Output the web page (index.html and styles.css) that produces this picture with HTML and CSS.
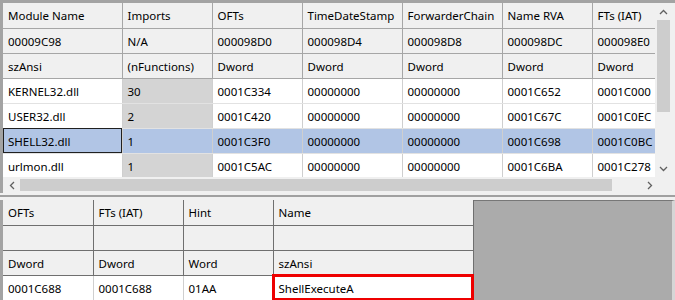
FILE: index.html
```html
<!DOCTYPE html>
<html>
<head>
    <title>Import Directory</title>
    <link rel="stylesheet" href="styles.css">
</head>
<body>
    <div class="pane top-pane">
        <div class="view">
            <div class="grid-wrap">
                <table class="grid modules">
                    <colgroup>
                        <col style="width:119px"><col style="width:90px"><col style="width:90px"><col style="width:100px"><col style="width:100px"><col style="width:90px"><col style="width:90px">
                    </colgroup>
                    <tr class="head">
                        <td>Module Name</td><td>Imports</td><td>OFTs</td><td>TimeDateStamp</td><td>ForwarderChain</td><td>Name RVA</td><td>FTs (IAT)</td>
                    </tr>
                    <tr class="head">
                        <td>00009C98</td><td>N/A</td><td>000098D0</td><td>000098D4</td><td>000098D8</td><td>000098DC</td><td>000098E0</td>
                    </tr>
                    <tr class="head">
                        <td>szAnsi</td><td>(nFunctions)</td><td>Dword</td><td>Dword</td><td>Dword</td><td>Dword</td><td>Dword</td>
                    </tr>
                    <tr>
                        <td>KERNEL32.dll</td><td class="count">30</td><td>0001C334</td><td>00000000</td><td>00000000</td><td>0001C652</td><td>0001C000</td>
                    </tr>
                    <tr>
                        <td>USER32.dll</td><td class="count">2</td><td>0001C420</td><td>00000000</td><td>00000000</td><td>0001C67C</td><td>0001C0EC</td>
                    </tr>
                    <tr class="selected">
                        <td class="focus">SHELL32.dll</td><td class="count">1</td><td>0001C3F0</td><td>00000000</td><td>00000000</td><td>0001C698</td><td>0001C0BC</td>
                    </tr>
                    <tr>
                        <td>urlmon.dll</td><td class="count">1</td><td>0001C5AC</td><td>00000000</td><td>00000000</td><td>0001C6BA</td><td>0001C278</td>
                    </tr>
                </table>
            </div>
            <div class="vscroll">
                <div class="arrow">
                    <svg width="9" height="6" viewBox="0 0 9 6"><path d="M1 5 L4.5 1.5 L8 5" fill="none" stroke="#606060" stroke-width="1.3"/></svg>
                </div>
                <div class="vtrack"><div class="vthumb"></div></div>
                <div class="arrow">
                    <svg width="9" height="6" viewBox="0 0 9 6"><path d="M1 1 L4.5 4.5 L8 1" fill="none" stroke="#606060" stroke-width="1.3"/></svg>
                </div>
            </div>
        </div>
        <div class="hscroll">
            <div class="arrow">
                <svg width="6" height="9" viewBox="0 0 6 9"><path d="M5 1 L1.5 4.5 L5 8" fill="none" stroke="#606060" stroke-width="1.3"/></svg>
            </div>
            <div class="htrack"><div class="hthumb"></div></div>
            <div class="arrow">
                <svg width="6" height="9" viewBox="0 0 6 9"><path d="M1 1 L4.5 4.5 L1 8" fill="none" stroke="#606060" stroke-width="1.3"/></svg>
            </div>
            <div class="corner"></div>
        </div>
    </div>

    <div class="splitter"></div>

    <div class="pane bottom-pane">
        <table class="grid functions">
            <colgroup>
                <col style="width:90px"><col style="width:90px"><col style="width:90px"><col style="width:200px">
            </colgroup>
            <tr class="head">
                <td>OFTs</td><td>FTs (IAT)</td><td>Hint</td><td>Name</td>
            </tr>
            <tr class="head">
                <td></td><td></td><td></td><td></td>
            </tr>
            <tr class="head">
                <td>Dword</td><td>Dword</td><td>Word</td><td>szAnsi</td>
            </tr>
            <tr>
                <td>0001C688</td><td>0001C688</td><td>01AA</td><td class="marked">ShellExecuteA</td>
            </tr>
        </table>
        <div class="empty"></div>
    </div>
</body>
</html>
```

FILE: styles.css
```css
body {
    margin: 0;
    width: 675px;
    height: 300px;
    overflow: hidden;
    background: #f0f0f0;
    font-family: "Noto Sans", "Open Sans", sans-serif;
    font-size: 11.5px;
    color: #000;
}

.pane {
    border-left: 3px solid #a3a3a3;
}

.top-pane {
    border-top: 3px solid #a3a3a3;
}

.view {
    display: flex;
    height: 174px;
}

.grid-wrap {
    width: 652px;
    overflow: hidden;
}

.grid {
    border-collapse: collapse;
    table-layout: fixed;
    white-space: nowrap;
}

.modules {
    width: 679px;
}

.grid tr {
    height: 25px;
}

.grid td {
    padding: 1px 5px 0;
    overflow: hidden;
    background: #fff;
    border-right: 1px solid #cfcfcf;
    border-bottom: 1px solid #e2e2e2;
}

.grid tr.head td {
    background: #f0f0f0;
    border-right: 1px solid #a6a6a6;
    border-bottom: 1px solid #a6a6a6;
}

.grid td.count {
    background: #d4d4d4;
}

.grid tr.selected td {
    background: #b1c5e5;
}

.grid td.focus {
    outline: 1px solid #202020;
    outline-offset: -1px;
}

.vscroll {
    width: 17px;
    display: flex;
    flex-direction: column;
    background: #f0f0f0;
}

.vscroll .arrow {
    height: 17px;
    display: flex;
    align-items: center;
    justify-content: center;
}

.vtrack {
    flex: 1;
    padding: 0 2px;
}

.vthumb {
    height: 92px;
    background: #cdcdcd;
}

.hscroll {
    display: flex;
    height: 16px;
    background: #f0f0f0;
}

.hscroll .arrow {
    width: 17px;
    display: flex;
    align-items: center;
    justify-content: center;
}

.htrack {
    flex: 1;
    padding: 2px 0;
}

.hthumb {
    width: 592px;
    height: 100%;
    background: #cdcdcd;
}

.corner {
    width: 17px;
}

.splitter {
    height: 2px;
    margin: 2px 0 3px;
    background: #a0a0a0;
}

.bottom-pane {
    display: flex;
    height: 100px;
}

.functions {
    width: 470px;
}

.functions tr.head td {
    border-right: 1px solid #6f6f6f;
    border-bottom: 1px solid #6f6f6f;
}

.functions td.marked {
    outline: 3px solid #ee0000;
    outline-offset: -2px;
    box-shadow: 0 0 3px rgba(0, 0, 0, 0.35);
}

.empty {
    flex: 1;
    background: #ababab;
    border-top: 1px solid #777;
    border-right: 3px solid #d6d6d6;
}
```
